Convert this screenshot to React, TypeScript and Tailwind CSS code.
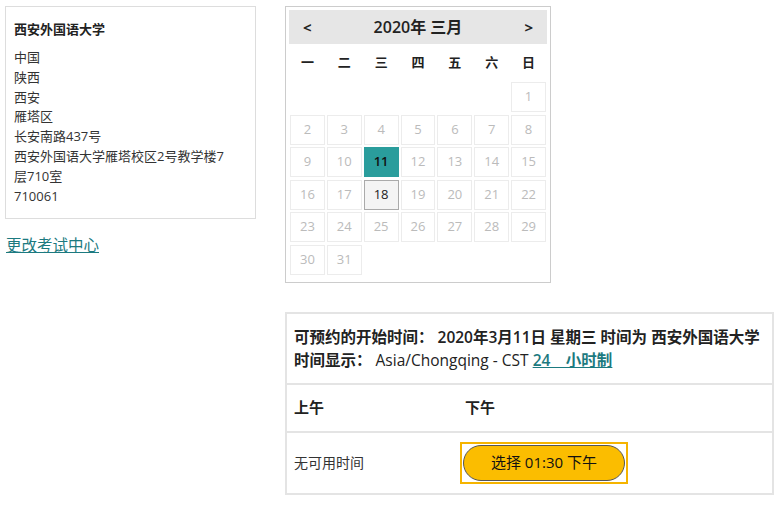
export default function App() {
  const weekdays = ['一', '二', '三', '四', '五', '六', '日'];
  const days: (number | null)[] = [null, null, null, null, null, null];
  for (let d = 1; d <= 31; d++) days.push(d);

  const address = ['中国', '陕西', '西安', '雁塔区', '长安南路437号', '西安外国语大学雁塔校区2号教学楼7', '层710室', '710061'];

  return (
    <div
      className="w-[780px] h-[505px] bg-white text-[#222] flex"
      style={{ fontFamily: '"Open Sans", "Noto Sans CJK SC", sans-serif' }}
    >
      {/* 考试中心 */}
      <div className="w-[280px] pl-[5px] pt-[6px] shrink-0">
        <div className="w-[251px] border border-[#ddd] px-[8px] pt-[12px] pb-[12px]">
          <div className="text-[13px] font-bold leading-[20px] mb-[9px]">西安外国语大学</div>
          {address.map((line) => (
            <div key={line} className="text-[13px] leading-[19.8px] text-[#333] whitespace-nowrap">
              {line}
            </div>
          ))}
        </div>
        <a href="#" className="inline-block mt-[16px] ml-[1px] text-[15.5px] text-[#1c7a80] underline leading-[20px]">
          更改考试中心
        </a>
      </div>

      <div className="flex flex-col pt-[6px] pl-[5px]">
        {/* 日历 */}
        <div className="w-[266px] border border-[#ccc] p-[3px] pb-[7px]">
          <div className="h-[34px] bg-[#e6e6e6] flex items-center justify-between px-[14px]">
            <span className="text-[15px] font-bold">&lt;</span>
            <span className="text-[16px] font-semibold">2020年 三月</span>
            <span className="text-[15px] font-bold">&gt;</span>
          </div>
          <div className="grid grid-cols-7 gap-x-[2px] px-[1px] h-[38px] items-center">
            {weekdays.map((w) => (
              <div key={w} className="text-center text-[13px] font-semibold">
                {w}
              </div>
            ))}
          </div>
          <div className="grid grid-cols-7 gap-x-[2px] gap-y-[2.5px] px-[1px]">
            {days.map((d, i) =>
              d === null ? (
                <div key={i} className="h-[30px]" />
              ) : d === 11 ? (
                <div key={i} className="h-[30px] bg-[#2a9d9c] border border-[#2a9d9c] flex items-center justify-center text-[13px] font-semibold text-[#111]">
                  {d}
                </div>
              ) : d === 18 ? (
                <div key={i} className="h-[30px] bg-[#f4f4f4] border border-[#aaa] flex items-center justify-center text-[13px] text-[#222]">
                  {d}
                </div>
              ) : (
                <div key={i} className="h-[30px] border border-[#ececec] flex items-center justify-center text-[13px] text-[#bbb]">
                  {d}
                </div>
              )
            )}
          </div>
        </div>

        {/* 可预约时间 */}
        <div className="w-[489px] mt-[29px] border-2 border-[#e4e4e4]">
          <div className="px-[7px] pt-[12px] pb-[11px] text-[15.5px] font-semibold leading-[23px] whitespace-nowrap">
            <div>可预约的开始时间： 2020年3月11日 星期三 时间为 西安外国语大学</div>
            <div>
              时间显示： <span className="font-normal">Asia/Chongqing - CST</span>{' '}
              <a href="#" className="text-[#1c7a80] underline font-semibold">24　小时制</a>
            </div>
          </div>
          <div className="flex border-t-2 border-[#e4e4e4] h-[48px] items-center text-[15px] font-semibold">
            <div className="w-[175px] pl-[7px]">上午</div>
            <div className="pl-[3px]">下午</div>
          </div>
          <div className="flex border-t-2 border-[#e4e4e4] h-[62px] items-center">
            <div className="w-[173px] pl-[7px] text-[14px] text-[#333]">无可用时间</div>
            <div className="border-2 border-[#f5b400] p-[1px]">
              <button className="w-[162px] h-[36px] rounded-full bg-[#fbbd00] border border-[#555] text-[15px] text-[#111]">
                选择 01:30 下午
              </button>
            </div>
          </div>
        </div>
      </div>
    </div>
  );
}
